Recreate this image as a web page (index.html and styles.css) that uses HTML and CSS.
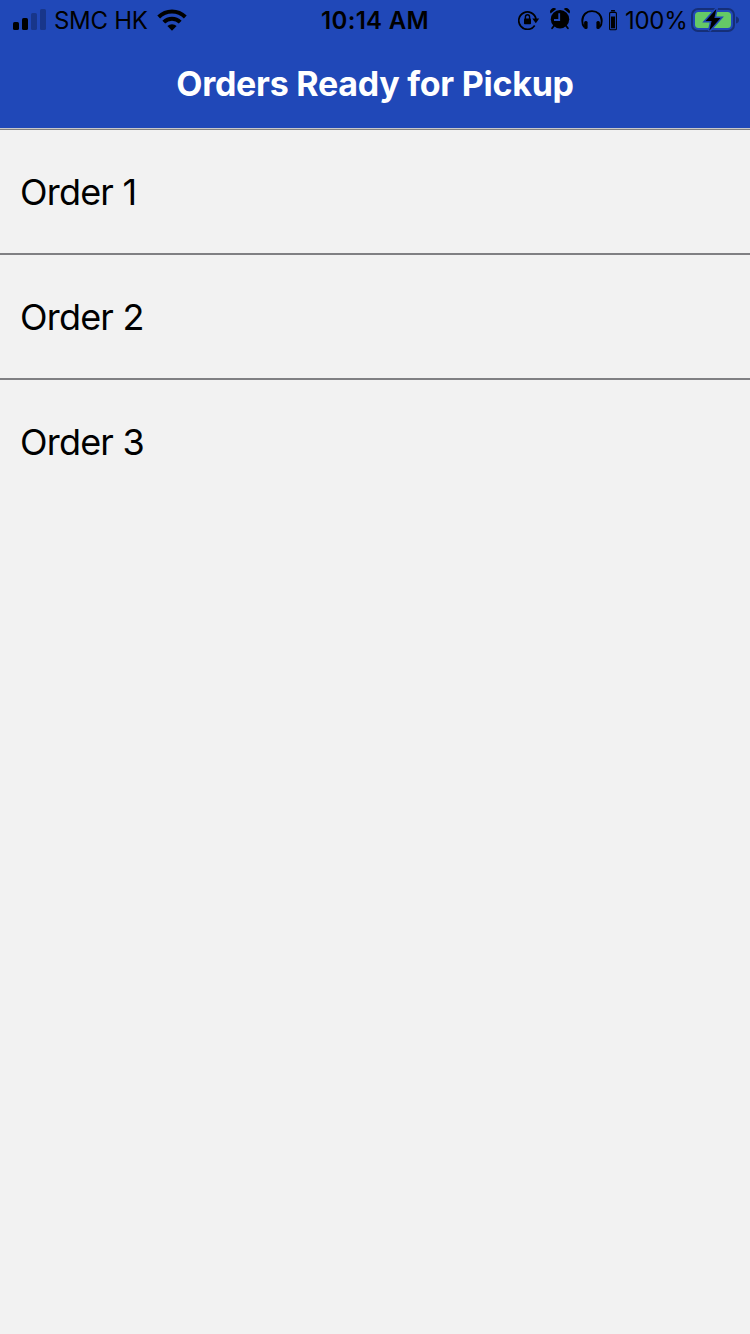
FILE: index.html
```html
<!DOCTYPE html>
<html lang="en">
<head>
<meta charset="utf-8">
<title>Orders Ready for Pickup</title>
<link rel="stylesheet" href="styles.css">
</head>
<body>
<header class="header">
  <div class="status">
    <div class="status-left">
      <svg class="signal" width="34" height="22" viewBox="0 0 34 22">
        <rect x="0" y="13" width="6" height="8" rx="1.6"/>
        <rect x="9" y="9" width="6" height="12" rx="1.6"/>
        <rect class="dim" x="18" y="4" width="6" height="17" rx="1.6"/>
        <rect class="dim" x="27" y="0" width="6" height="21" rx="1.6"/>
      </svg>
      <span class="carrier">SMC HK</span>
      <svg class="wifi" width="30" height="22" viewBox="0 0 30 22">
        <path class="line" stroke-width="4" d="M1.7 8A19 19 0 0 1 28.3 8"/>
        <path class="line" stroke-width="4" d="M6.8 13.1A11.6 11.6 0 0 1 23.2 13.1"/>
        <path d="M10.4 17.1A6.5 6.5 0 0 1 19.6 17.1L15 21.7Z"/>
      </svg>
    </div>
    <span class="time">10:14 AM</span>
    <div class="status-right">
      <svg class="lock" width="22" height="20" viewBox="0 0 22 20">
        <path class="line" stroke-width="1.7" d="M16.7 15.5A8.7 8.7 0 1 1 18 9"/>
        <path d="M14.3 8.5H21.2L17.8 13.2Z"/>
        <rect x="6" y="8.6" width="7" height="5.7" rx=".8"/>
        <path class="line" stroke-width="1.4" d="M7.4 9V7a2.1 2.3 0 0 1 4.2 0V9"/>
      </svg>
      <svg class="alarm" width="20" height="22" viewBox="0 0 20 22">
        <path d="M.6 5.5A3.6 3.6 0 0 1 6.2 1.1ZM19.4 5.5A3.6 3.6 0 0 0 13.8 1.1Z"/>
        <circle cx="10" cy="11.3" r="9.2"/>
        <path class="line" stroke-width="1.8" stroke-linecap="round" d="M4.4 17.3L2.1 20.3M15.6 17.3L17.9 20.3"/>
        <path class="hands" d="M9.2 5.3V12H4"/>
      </svg>
      <svg class="headphones" width="22" height="20" viewBox="0 0 22 20">
        <path class="line" stroke-width="1.9" d="M3.2 17.2Q1.3 15 1.3 11C1.3 4.9 5.5 1.1 11 1.1S20.7 4.9 20.7 11Q20.7 15 18.8 17.2"/>
        <rect x="3.1" y="11.1" width="3.5" height="8" rx="1.5"/>
        <rect x="15.4" y="11.1" width="3.5" height="8" rx="1.5"/>
      </svg>
      <svg class="device" width="8" height="21" viewBox="0 0 8 21">
        <rect x="2" y="0" width="4" height="1.4" rx=".5"/>
        <rect class="line" stroke-width="1.1" x=".6" y="2.4" width="6.8" height="17.3" rx="1"/>
        <rect x="2" y="6.5" width="4" height="11.8"/>
      </svg>
      <span class="percent">100%</span>
      <svg class="battery" width="48" height="26" viewBox="0 0 48 26">
        <rect class="shell" x="1" y="2" width="42" height="22" rx="6"/>
        <path class="tip" d="M45 9.5Q48 10.5 48 13T45 16.5Z"/>
        <rect class="fill" x="4" y="5" width="36" height="16" rx="3.5"/>
        <path class="bolt" d="M25.3 2L14.6 14H20.6L18.3 23.8L29.6 11H23.4Z"/>
      </svg>
    </div>
  </div>
  <h1 class="title">Orders Ready for Pickup</h1>
</header>
<main class="orders">
  <div class="order"><span>Order 1</span></div>
  <div class="order"><span>Order 2</span></div>
  <div class="order"><span>Order 3</span></div>
</main>
</body>
</html>
```

FILE: styles.css
```css
* { box-sizing: border-box; }
body {
  margin: 0;
  min-height: 1334px;
  background: #f2f2f2;
  color: #000;
  font-family: Inter, "Liberation Sans", sans-serif;
}
svg { display: block; flex: none; }
.header {
  height: 129px;
  background: #2048b8;
  border-bottom: 1px solid #c8c8ca;
}
.status {
  height: 40px;
  display: grid;
  grid-template-columns: 1fr auto 1fr;
  font-size: 24px;
  line-height: 42px;
  white-space: nowrap;
}
.status-left, .status-right { display: flex; align-items: flex-start; }
.status-left { padding-left: 13px; }
.status-right { justify-content: flex-end; padding-right: 11px; }
.signal { margin-top: 9px; }
.dim { opacity: .25; }
.carrier { width: 94px; margin-left: 7px; letter-spacing: -.3px; }
.wifi { margin-left: 9px; margin-top: 9px; }
.time { font-weight: 600; letter-spacing: .3px; }
.line { fill: none; stroke: #000; }
.lock { margin-top: 10px; }
.alarm { margin: 8px 0 0 10px; }
.hands { fill: none; stroke: #2048b8; stroke-width: 1.8; }
.headphones { margin: 10px 0 0 11px; }
.device { margin: 10px 0 0 6px; }
.percent { width: 66px; margin-left: 8px; letter-spacing: -.3px; }
.battery { margin-top: 7px; }
.shell { fill: none; stroke: #152f78; stroke-width: 2; }
.tip { fill: #152f78; }
.fill { fill: #65c966; }
.bolt { fill: #000; stroke: #2048b8; stroke-width: 3; paint-order: stroke; }
.title {
  margin: 0;
  height: 88px;
  text-align: center;
  color: #fff;
  font-size: 34px;
  font-weight: 700;
  letter-spacing: -.26px;
  line-height: 88px;
  white-space: nowrap;
}
.orders { border-top: 1px solid #7f7f82; }
.order {
  height: 125px;
  padding: 1px 20px 0;
  display: flex;
  align-items: center;
  border-bottom: 2px solid #808083;
  font-size: 36px;
  line-height: 44px;
  letter-spacing: -.8px;
}
.order:last-child { border-bottom-color: transparent; }
```
